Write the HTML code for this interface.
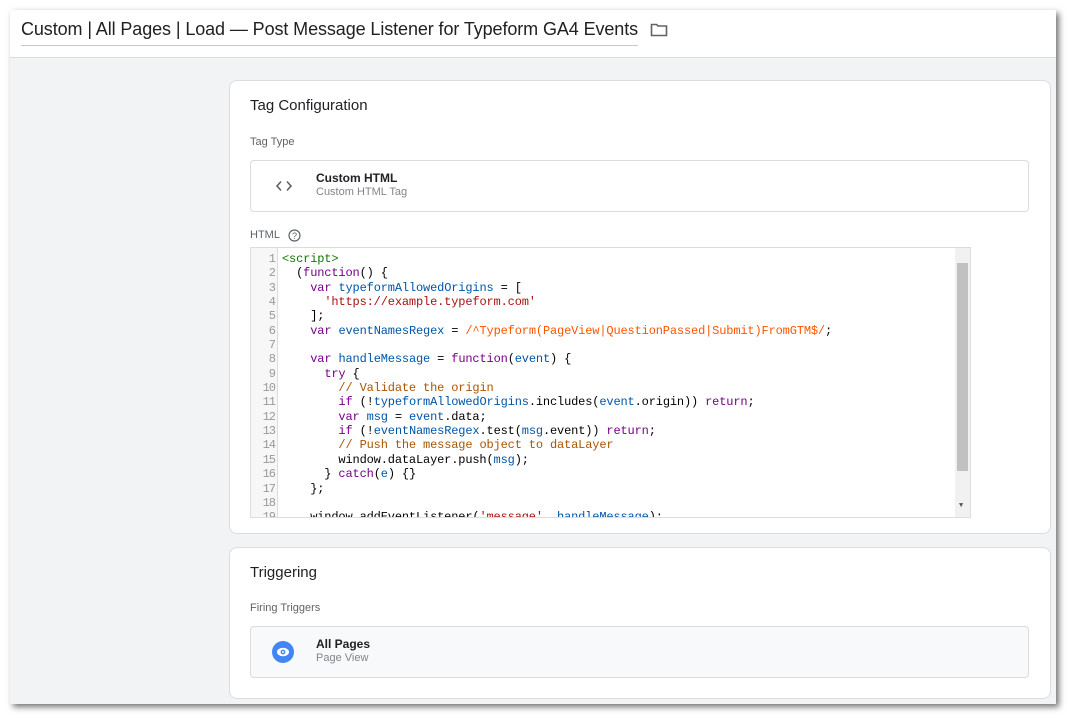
<!DOCTYPE html>
<html><head><style>
*{margin:0;padding:0;box-sizing:border-box}
body{width:1072px;height:718px;background:#fff;font-family:"Liberation Sans",Arial,sans-serif;position:relative;overflow:hidden}
.win{position:absolute;left:10px;top:10px;width:1046px;height:694px;background:#f1f3f4;box-shadow:3px 3px 6px rgba(0,0,0,.55);overflow:hidden}
.hdr{position:absolute;left:0;top:0;right:0;height:48px;background:#fff;border-bottom:1px solid #dadce0}
.title{position:absolute;left:11px;top:9px;font-size:18px;color:#202124;letter-spacing:-.1px;padding-bottom:5px;border-bottom:1px solid #c8c8c8;width:617px;white-space:nowrap}
.card{position:absolute;left:219px;width:822px;background:#fff;border:1px solid #dadce0;border-radius:8px}
.ct{position:absolute;left:20px;font-size:15px;color:#202124}
.lbl{position:absolute;left:20px;font-size:11px;color:#5f6368}
.box{position:absolute;left:20px;width:779px;height:52px;border:1px solid #dadce0;border-radius:4px}
.nm{position:absolute;left:65px;top:10px;font-size:12px;font-weight:bold;color:#202124}
.sub{position:absolute;left:65px;top:25px;font-size:11px;color:#80868b}
.ed{position:absolute;left:20px;top:166px;width:721px;height:271px;border:1px solid #ddd;overflow:hidden;font-family:"Liberation Mono","DejaVu Sans Mono",monospace;font-size:12px;letter-spacing:-0.15px;line-height:14.35px}
.gut{position:absolute;left:0;top:0;width:27px;height:100%;background:#f7f7f7;border-right:1px solid #ddd;color:#999;text-align:right;padding:4px 2px 0 0;letter-spacing:-1px}
.code{position:absolute;left:31px;top:4px;white-space:pre;color:#000}
.sb{position:absolute;right:0;top:0;width:15px;height:100%;background:#f1f1f1}
.th{position:absolute;left:2px;top:15px;width:11px;height:208px;background:#c1c1c1}
.k{color:#708}.v{color:#05a}.s{color:#a11}.r{color:#f50}.c{color:#a50}.t{color:#170}
</style></head><body>
<div class="win">
<div class="hdr"><div class="title">Custom | All Pages | Load — Post Message Listener for Typeform GA4 Events</div>
<svg style="position:absolute;left:640px;top:12px" width="18" height="16" viewBox="0 0 18 16"><path d="M1.5 2.5h5l1.5 1.5h8.5v9.5h-15z" fill="none" stroke="#5f6368" stroke-width="1.6"/></svg></div>
<div class="card" style="top:70px;height:454px">
<div class="ct" style="top:16px">Tag Configuration</div>
<div class="lbl" style="top:55px">Tag Type</div>
<div class="box" style="top:79px">
<svg style="position:absolute;left:24px;top:19px" width="18" height="12" viewBox="0 0 18 12"><path d="M6 1.5L2 6l4 4.5M12 1.5l4 4.5-4 4.5" fill="none" stroke="#5f6368" stroke-width="1.6"/></svg>
<div class="nm">Custom HTML</div><div class="sub">Custom HTML Tag</div></div>
<div class="lbl" style="top:148px">HTML</div>
<svg style="position:absolute;left:58px;top:148px" width="13" height="13" viewBox="0 0 13 13"><circle cx="6.5" cy="6.5" r="5.5" fill="none" stroke="#5f6368" stroke-width="1.2"/><text x="6.5" y="9.8" font-size="9" text-anchor="middle" fill="#5f6368" font-family="Liberation Sans">?</text></svg>
<div class="ed">
<div class="gut">1<br>2<br>3<br>4<br>5<br>6<br>7<br>8<br>9<br>10<br>11<br>12<br>13<br>14<br>15<br>16<br>17<br>18<br>19</div>
<div class="code"><span class="t">&lt;script&gt;</span>
  (<span class="k">function</span>() {
    <span class="k">var</span> <span class="v">typeformAllowedOrigins</span> = [
      <span class="s">'https://example.typeform.com'</span>
    ];
    <span class="k">var</span> <span class="v">eventNamesRegex</span> = <span class="r">/^Typeform(PageView|QuestionPassed|Submit)FromGTM$/</span>;

    <span class="k">var</span> <span class="v">handleMessage</span> = <span class="k">function</span>(<span class="v">event</span>) {
      <span class="k">try</span> {
        <span class="c">// Validate the origin</span>
        <span class="k">if</span> (!<span class="v">typeformAllowedOrigins</span>.includes(<span class="v">event</span>.origin)) <span class="k">return</span>;
        <span class="k">var</span> <span class="v">msg</span> = <span class="v">event</span>.data;
        <span class="k">if</span> (!<span class="v">eventNamesRegex</span>.test(<span class="v">msg</span>.event)) <span class="k">return</span>;
        <span class="c">// Push the message object to dataLayer</span>
        window.dataLayer.push(<span class="v">msg</span>);
      } <span class="k">catch</span>(<span class="v">e</span>) {}
    };

    window.addEventListener(<span class="s">'message'</span>, <span class="v">handleMessage</span>);</div>
<div class="sb"><div class="th"></div><div style="position:absolute;left:4px;bottom:4px;font-size:7px;color:#555;letter-spacing:0">▼</div></div>
</div>
</div>
<div class="card" style="top:537px;height:152px">
<div class="ct" style="top:16px">Triggering</div>
<div class="lbl" style="top:54px">Firing Triggers</div>
<div class="box" style="top:78px;background:#f8f9fa">
<svg style="position:absolute;left:21px;top:14px" width="22" height="22" viewBox="0 0 22 22"><circle cx="11" cy="11" r="11" fill="#4285f4"/><ellipse cx="11" cy="11" rx="6" ry="4.3" fill="#fff"/><circle cx="11" cy="11" r="2.4" fill="#4285f4"/><circle cx="11" cy="11" r="1" fill="#fff"/></svg>
<div class="nm">All Pages</div><div class="sub">Page View</div></div>
</div>
</div>
</body></html>
